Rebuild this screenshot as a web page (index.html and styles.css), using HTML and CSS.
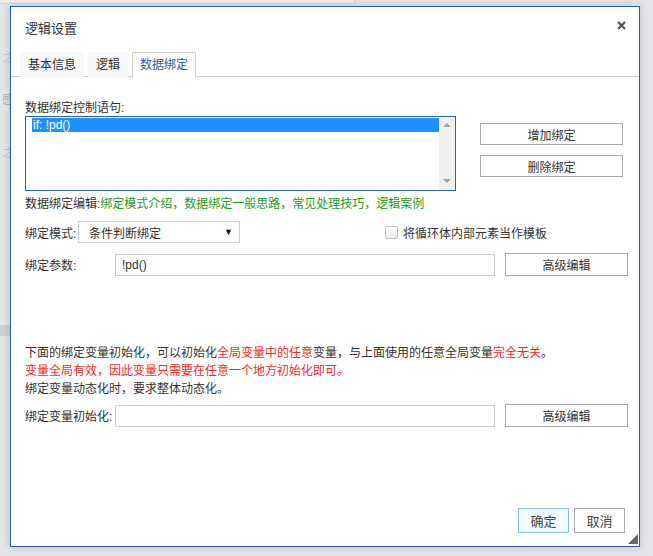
FILE: index.html
```html
<!DOCTYPE html>
<html lang="zh-CN">
<head>
    <meta charset="UTF-8">
    <title>逻辑设置</title>
    <link rel="stylesheet" href="styles.css">
</head>
<body>
    <div class="page-bg">
        <div class="page-strip"></div>
        <span class="bg-char c1">之</span>
        <span class="bg-char c2">感</span>
        <span class="bg-char c3">之</span>
        <div class="bg-bar"></div>
    </div>

    <div class="dialog">
        <div class="dlg-head">
            <span class="dlg-title">逻辑设置</span>
            <svg class="dlg-close" width="9" height="9" viewBox="0 0 9 9">
                <path d="M1 1 L8 8 M8 1 L1 8" stroke="#555" stroke-width="2.2"/>
            </svg>
        </div>

        <div class="tabs">
            <div class="tab">基本信息</div>
            <div class="tab">逻辑</div>
            <div class="tab active">数据绑定</div>
        </div>

        <div class="dlg-body">
            <div class="line list-label">数据绑定控制语句:</div>
            <div class="bind-row">
                <div class="listbox">
                    <div class="list-items">
                        <div class="list-item selected">if: !pd()</div>
                    </div>
                    <div class="scrollbar">
                        <span class="arrow up"></span>
                        <span class="arrow down"></span>
                    </div>
                </div>
                <div class="bind-btns">
                    <button class="btn wide">增加绑定</button>
                    <button class="btn wide">删除绑定</button>
                </div>
            </div>

            <div class="line edit-line">数据绑定编辑:<span class="green">绑定模式介绍，数据绑定一般思路，常见处理技巧，逻辑案例</span></div>

            <div class="mode-row">
                <span class="mode-label">绑定模式:</span>
                <div class="select">
                    <span>条件判断绑定</span>
                    <span class="caret">▼</span>
                </div>
                <label class="check">
                    <span class="checkbox"></span>
                    将循环体内部元素当作模板
                </label>
            </div>

            <div class="field-row">
                <span class="field-label">绑定参数:</span>
                <div class="input">!pd()</div>
                <button class="btn adv">高级编辑</button>
            </div>

            <div class="notes">
                <div>下面的绑定变量初始化，可以初始化<span class="red">全局变量中的任意</span>变量，与上面使用的任意全局变量<span class="red">完全无关</span>。</div>
                <div class="red">变量全局有效，因此变量只需要在任意一个地方初始化即可。</div>
                <div>绑定变量动态化时，要求整体动态化。</div>
            </div>

            <div class="field-row init-row">
                <span class="field-label">绑定变量初始化:</span>
                <div class="input"></div>
                <button class="btn adv">高级编辑</button>
            </div>
        </div>

        <div class="dlg-foot">
            <button class="btn small primary">确定</button>
            <button class="btn small">取消</button>
        </div>
        <span class="grip"></span>
    </div>
</body>
</html>
```

FILE: styles.css
```css
body {
    margin: 0;
    padding: 0;
    background: #e4e5e8;
    font-family: "Liberation Sans", "Noto Sans CJK SC", sans-serif;
    font-size: 12px;
    color: #333;
    position: relative;
    height: 556px;
    overflow: hidden;
}
.page-strip {
    position: absolute;
    left: 0;
    top: 0;
    width: 354px;
    height: 3px;
    background: #ececee;
    border-right: 1px solid #d4d4d6;
    border-bottom: 1px solid #d4d4d6;
}
.bg-char {
    position: absolute;
    left: 2px;
    font-size: 12px;
    color: #b0b0b4;
}
.c1 { top: 48px; color: #c8c8cc; }
.c2 { top: 90px; }
.c3 { top: 143px; color: #c8c8cc; }
.bg-bar {
    position: absolute;
    left: 0;
    top: 325px;
    width: 10px;
    height: 11px;
    background: #d0d0d2;
}
.dialog {
    position: absolute;
    left: 10px;
    top: 6px;
    width: 628px;
    height: 539px;
    border: 1px solid #2d5ead;
    background: #fff;
    box-shadow: 0 0 8px rgba(0,0,0,0.18);
    display: flex;
    flex-direction: column;
}
.dlg-head {
    height: 45px;
    display: flex;
    justify-content: space-between;
    align-items: flex-start;
    padding: 0 13px 0 14px;
}
.dlg-title {
    font-size: 13px;
    line-height: 16px;
    margin-top: 14px;
    color: #333;
}
.dlg-close {
    margin-top: 14px;
}
.tabs {
    display: flex;
    gap: 4px;
    padding-left: 9px;
    border-bottom: 1px solid #d0d0d0;
    height: 24px;
}
.tab {
    height: 24px;
    line-height: 25px;
    padding: 0 7px;
    background: #f7f7f7;
    border: 1px solid transparent;
    border-bottom: none;
    color: #333;
}
.tab.active {
    background: #fff;
    border-color: #d0d0d0;
    color: #2f5ca6;
    height: 25px;
}
.dlg-body {
    padding: 21px 0 0 14px;
}
.line {
    line-height: 16px;
}
.list-label {
    line-height: 18px;
    padding-top: 1px;
}
.bind-row {
    display: flex;
    margin-top: -1px;
}
.listbox {
    width: 429px;
    height: 73px;
    border: 1px solid #2f5fa8;
    display: flex;
}
.list-items {
    flex: 1;
    padding: 1px 0 0 6px;
}
.list-item {
    height: 14px;
    line-height: 14px;
    padding-left: 1px;
    font-size: 12px;
}
.list-item.selected {
    background: #1e90ff;
    color: #fff;
}
.scrollbar {
    width: 16px;
    background: #f0f0f0;
    position: relative;
}
.arrow {
    position: absolute;
    left: 4px;
    width: 0;
    height: 0;
    border-left: 4px solid transparent;
    border-right: 4px solid transparent;
}
.arrow.up {
    top: 6px;
    border-bottom: 4px solid #a3a3a3;
}
.arrow.down {
    bottom: 7px;
    border-top: 4px solid #a3a3a3;
}
.bind-btns {
    display: flex;
    flex-direction: column;
    gap: 10px;
    margin-left: 24px;
    padding-top: 7px;
}
.btn {
    font-family: "Liberation Sans", "Noto Sans CJK SC", sans-serif;
    font-size: 12px;
    color: #333;
    background: #fff;
    border: 1px solid #aaa;
    padding: 0;
    cursor: pointer;
}
.btn.wide {
    width: 143px;
    height: 22px;
}
.edit-line {
    margin-top: 5px;
}
.green {
    color: #1f9a1f;
}
.red {
    color: #ff1f1f;
}
.mode-row {
    display: flex;
    align-items: center;
    margin-top: 9px;
    height: 22px;
}
.mode-label {
    width: 53px;
}
.select {
    height: 20px;
    border: 1px solid #cfd3da;
    display: flex;
    align-items: center;
    justify-content: space-between;
    padding: 0 6px 0 10px;
    box-sizing: content-box;
    width: 144px;
}
.caret {
    font-size: 9px;
    color: #111;
}
.check {
    display: flex;
    align-items: center;
    margin-left: 145px;
    gap: 5px;
}
.checkbox {
    width: 11px;
    height: 11px;
    border: 1px solid #c2c2c2;
    border-radius: 2px;
    background: linear-gradient(#fff, #ededed);
}
.field-row {
    display: flex;
    align-items: center;
    margin-top: 10px;
    height: 23px;
}
.field-label {
    width: 90px;
}
.input {
    width: 372px;
    height: 20px;
    line-height: 20px;
    border: 1px solid #c8ccd4;
    padding-left: 6px;
}
.btn.adv {
    width: 123px;
    height: 23px;
    margin-left: 10px;
}
.notes {
    margin-top: 68px;
    line-height: 18px;
}
.init-row {
    margin-top: 6px;
}
.dlg-foot {
    margin-top: auto;
    display: flex;
    justify-content: flex-end;
    gap: 5px;
    padding: 0 14px 13px 0;
}
.btn.small {
    width: 51px;
    height: 25px;
    font-size: 13px;
    color: #444;
}
.btn.primary {
    background: #f2f8ff;
    border-color: #8cbaf2;
}
.grip {
    position: absolute;
    right: 1px;
    bottom: 2px;
    width: 0;
    height: 0;
    border-left: 10px solid transparent;
    border-bottom: 10px solid #666;
}
```
